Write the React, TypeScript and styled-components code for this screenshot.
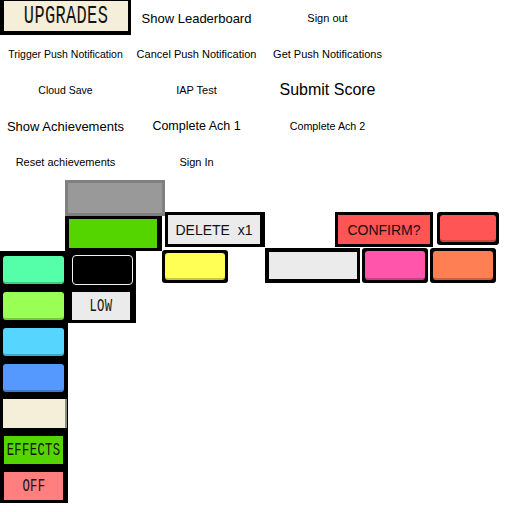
import styled, { createGlobalStyle } from 'styled-components';

const GlobalStyle = createGlobalStyle`
    body {
        margin: 0;
        background: #ffffff;
        font-family: "Liberation Sans", Arial, sans-serif;
    }
`;

const MENU = [
    [null, { label: 'Show Leaderboard', size: 13 }, { label: 'Sign out', size: 11 }],
    [
        { label: 'Trigger Push Notification', size: 10.5 },
        { label: 'Cancel Push Notification', size: 11 },
        { label: 'Get Push Notifications', size: 11 },
    ],
    [
        { label: 'Cloud Save', size: 10.5 },
        { label: 'IAP Test', size: 11 },
        { label: 'Submit Score', size: 16 },
    ],
    [
        { label: 'Show Achievements', size: 13 },
        { label: 'Complete Ach 1', size: 12.5 },
        { label: 'Complete Ach 2', size: 10.7 },
    ],
    [{ label: 'Reset achievements', size: 11 }, { label: 'Sign In', size: 11 }, null],
];

const COLOR_KEYS = ['#55ffaa', '#99ff55', '#55d5ff', '#5599ff'];

const App = () => {
    return (
        <>
            <GlobalStyle />
            <Page>
                <MenuGrid>
                    {MENU.flat().map((item, i) =>
                        i === 0 ? (
                            <Cell key={i}>
                                <UpgradeButton>
                                    <LcdText $size={25}>UPGRADES</LcdText>
                                </UpgradeButton>
                            </Cell>
                        ) : (
                            <Cell key={i} $size={item ? item.size : 11}>
                                {item ? item.label : ''}
                            </Cell>
                        )
                    )}
                </MenuGrid>

                <TopRow>
                    <GrayBox />
                </TopRow>

                <MiddleRow>
                    <GreenBox />
                    <DeleteBox>DELETE  x1</DeleteBox>
                    <ConfirmBox>CONFIRM?</ConfirmBox>
                    <Swatch $width={62} $height={33} $left={4}>
                        <SwatchFill $color="#ff5555" />
                    </Swatch>
                </MiddleRow>

                <BottomRow>
                    <LeftColumn>
                        {COLOR_KEYS.map((c) => (
                            <ColorKey key={c} $color={c} />
                        ))}
                        <CreamKey />
                        <FlatKey $color="#55d500">
                            <LcdText $size={18}>EFFECTS</LcdText>
                        </FlatKey>
                        <FlatKey $color="#ff7f7f">
                            <LcdText $size={18}>OFF</LcdText>
                        </FlatKey>
                    </LeftColumn>

                    <MidColumn>
                        <BlackButton />
                        <LowBox>
                            <LcdText $size={18}>LOW</LcdText>
                        </LowBox>
                    </MidColumn>

                    <Swatch $width={66} $height={33} $left={26} $top={3}>
                        <SwatchFill $color="#ffff55" />
                    </Swatch>
                    <WideBox />
                    <Swatch $width={66} $height={35} $left={2} $top={1}>
                        <SwatchFill $color="#ff55aa" />
                    </Swatch>
                    <Swatch $width={66} $height={35} $left={2} $top={1}>
                        <SwatchFill $color="#ff7f55" />
                    </Swatch>
                </BottomRow>
            </Page>
        </>
    );
};

export default App;

const Page = styled.div`
    width: 512px;
    height: 512px;
    overflow: hidden;
    position: relative;
`;

const MenuGrid = styled.div`
    display: grid;
    grid-template-columns: repeat(3, 131px);
    grid-auto-rows: 36px;
`;

const Cell = styled.div<{ $size?: number }>`
    display: flex;
    align-items: center;
    justify-content: center;
    font-size: ${({ $size }) => $size ?? 11}px;
    color: #000;
    white-space: nowrap;
`;

const UpgradeButton = styled.div`
    align-self: flex-start;
    width: 131px;
    height: 35px;
    box-sizing: border-box;
    background: #f5eed9;
    border: 4px solid #000;
    border-top-width: 1px;
    border-right-width: 3px;
    display: flex;
    align-items: center;
    justify-content: center;
`;

const LcdText = styled.span<{ $size: number }>`
    display: inline-block;
    font-family: "Liberation Mono", "DejaVu Sans Mono", monospace;
    font-size: ${({ $size }) => $size}px;
    line-height: 1;
    color: #141414;
    transform: scaleX(0.68);
    letter-spacing: 0.5px;
`;

const TopRow = styled.div`
    display: flex;
    height: 32px;
    padding-left: 65px;
`;

const GrayBox = styled.div`
    width: 100px;
    height: 36px;
    flex-shrink: 0;
    box-sizing: border-box;
    background: #999999;
    border: 3px solid #808080;
`;

const MiddleRow = styled.div`
    display: flex;
    align-items: flex-start;
    height: 35px;
`;

const GreenBox = styled.div`
    margin: 4px 0 0 65px;
    width: 97px;
    height: 35px;
    flex-shrink: 0;
    box-sizing: border-box;
    background: #55d500;
    border: 3px solid #000;
    border-left-width: 4px;
    border-right-width: 5px;
`;

const LabelBox = styled.div`
    height: 35px;
    flex-shrink: 0;
    box-sizing: border-box;
    border: 3px solid #000;
    display: flex;
    align-items: center;
    justify-content: center;
    font-size: 14px;
    color: #111;
    white-space: pre;
`;

const DeleteBox = styled(LabelBox)`
    margin-left: 3px;
    width: 100px;
    background: #ebebeb;
    border-right-width: 5px;
`;

const ConfirmBox = styled(LabelBox)`
    margin-left: 70px;
    width: 98px;
    background: #ff5555;
`;

const Swatch = styled.div<{ $width: number; $height: number; $left?: number; $top?: number }>`
    margin-left: ${({ $left }) => $left ?? 0}px;
    margin-top: ${({ $top }) => $top ?? 0}px;
    width: ${({ $width }) => $width}px;
    height: ${({ $height }) => $height}px;
    flex-shrink: 0;
    box-sizing: border-box;
    padding: 3px;
    background: #000;
    border-radius: 3px;
    display: flex;
`;

const SwatchFill = styled.div<{ $color: string }>`
    flex: 1;
    background: ${({ $color }) => $color};
    border-radius: 3px;
    box-shadow: inset 0 -2px 0 rgba(0, 0, 0, 0.22);
`;

const BottomRow = styled.div`
    display: flex;
    align-items: flex-start;
`;

const LeftColumn = styled.div`
    margin-top: 4px;
    width: 68px;
    flex-shrink: 0;
    box-sizing: border-box;
    padding: 5px 4px 3px 3px;
    background: #000;
    display: flex;
    flex-direction: column;
    gap: 8px;
`;

const ColorKey = styled.div<{ $color: string }>`
    height: 28px;
    background: ${({ $color }) => $color};
    border-radius: 3px;
    box-shadow: inset 0 -2px 0 rgba(0, 0, 0, 0.22);
`;

const CreamKey = styled.div`
    height: 29px;
    margin: -1px -3px 0 0;
    background: #f5eed9;
    border-right: 2px solid #8a8a80;
`;

const FlatKey = styled.div<{ $color: string }>`
    height: 28px;
    margin: 0 1px;
    background: ${({ $color }) => $color};
    display: flex;
    align-items: center;
    justify-content: center;
`;

const MidColumn = styled.div`
    margin-top: 4px;
    width: 68px;
    flex-shrink: 0;
    box-sizing: border-box;
    padding: 4px 3px 3px 4px;
    background: #000;
    display: flex;
    flex-direction: column;
    gap: 7px;
`;

const BlackButton = styled.div`
    height: 30px;
    box-sizing: border-box;
    border: 1px solid #f2f2f2;
    border-radius: 4px;
    background: #000;
`;

const LowBox = styled.div`
    height: 28px;
    width: 58px;
    background: #ebebeb;
    display: flex;
    align-items: center;
    justify-content: center;
`;

const WideBox = styled.div`
    margin: 1px 0 0 37px;
    width: 95px;
    height: 35px;
    flex-shrink: 0;
    box-sizing: border-box;
    background: #ebebeb;
    border: 4px solid #000;
    border-right-width: 3px;
`;
